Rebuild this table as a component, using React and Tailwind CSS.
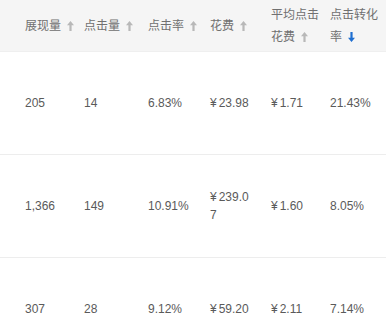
import React from 'react';

// sort arrow, filled head + stem
const SortArrow = ({ dir = 'up', active = false }) => (
  <svg
    width="7"
    height="10"
    viewBox="0 0 7 10"
    className={`inline-block ml-[6px] align-[-1px] ${active ? 'text-[#1f6fd1]' : 'text-[#b8b8b8]'}`}
    fill="currentColor"
    style={dir === 'down' ? { transform: 'rotate(180deg)' } : undefined}
  >
    <path d="M3.5 0 L7 4.2 L4.6 4.2 L4.6 10 L2.4 10 L2.4 4.2 L0 4.2 Z" />
  </svg>
);

const columns = [
  { key: 'show', label: '展现量', w: 'w-[59px]' },
  { key: 'click', label: '点击量', w: 'w-[64px]' },
  { key: 'ctr', label: '点击率', w: 'w-[62px]' },
  { key: 'cost', label: '花费', w: 'w-[61px]' },
  { key: 'cpc', label: ['平均点击', '花费'], w: 'w-[59px]' },
  { key: 'cvr', label: ['点击转化', '率'], w: 'w-[56px]', active: true, dir: 'down' },
];

const rows = [
  ['205', '14', '6.83%', '¥23.98', '¥1.71', '21.43%'],
  ['1,366', '149', '10.91%', '¥239.07', '¥1.60', '8.05%'],
  ['307', '28', '9.12%', '¥59.20', '¥2.11', '7.14%'],
];

const Cell = ({ v }) => {
  if (v.startsWith('¥')) {
    return (
      <>
        <span className="pr-[2px]">¥</span>
        {v.slice(1)}
      </>
    );
  }
  return v;
};

export default function App() {
  return (
    <div
      className="w-[386px] h-[325px] overflow-hidden bg-white text-[12px]"
      style={{ fontFamily: '"Liberation Sans", "Noto Sans CJK SC", sans-serif' }}
    >
      {/* header */}
      <div className="flex h-[52px] bg-[#f5f5f5] pl-[25px] text-[#707070] border-b border-[#efefef]">
        {columns.map((c) => (
          <div key={c.key} className={`${c.w} shrink-0 flex items-center`}>
            {Array.isArray(c.label) ? (
              <div className="leading-[22px]">
                <div>{c.label[0]}</div>
                <div>
                  {c.label[1]}
                  <SortArrow dir={c.dir} active={c.active} />
                </div>
              </div>
            ) : (
              <div className="leading-[22px]">
                {c.label}
                <SortArrow />
              </div>
            )}
          </div>
        ))}
      </div>

      {/* body */}
      {rows.map((r, i) => (
        <div key={i} className="flex h-[103px] pl-[25px] text-[#5a5a5a] border-b border-[#ededed]">
          {r.map((v, j) => (
            <div key={j} className={`${columns[j].w} shrink-0 flex items-center`}>
              <div className="w-[42px] break-all leading-[18px]">
                <Cell v={v} />
              </div>
            </div>
          ))}
        </div>
      ))}
    </div>
  );
}
